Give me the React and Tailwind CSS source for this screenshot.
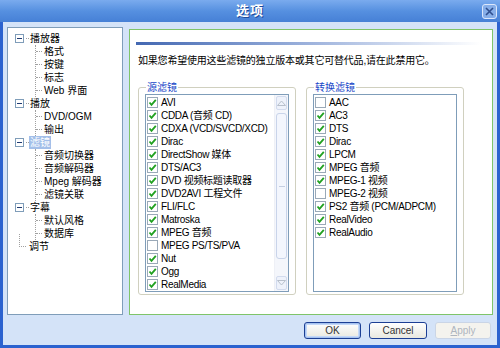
import React from 'react';

const FONT = { fontFamily: '"Liberation Sans", "Noto Sans CJK SC", sans-serif' };

const tree = [
  { label: '播放器', children: ['格式', '按键', '标志', 'Web 界面'] },
  { label: '播放', children: ['DVD/OGM', '输出'] },
  { label: '滤镜', selected: true, children: ['音频切换器', '音频解码器', 'Mpeg 解码器', '滤镜关联'] },
  { label: '字幕', children: ['默认风格', '数据库'] },
];

const sourceFilters = [
  ['AVI', true],
  ['CDDA (音频 CD)', true],
  ['CDXA (VCD/SVCD/XCD)', true],
  ['Dirac', true],
  ['DirectShow 媒体', true],
  ['DTS/AC3', true],
  ['DVD 视频标题读取器', true],
  ['DVD2AVI 工程文件', true],
  ['FLI/FLC', true],
  ['Matroska', true],
  ['MPEG 音频', true],
  ['MPEG PS/TS/PVA', false],
  ['Nut', true],
  ['Ogg', true],
  ['RealMedia', true],
];

const transformFilters = [
  ['AAC', false],
  ['AC3', true],
  ['DTS', true],
  ['Dirac', true],
  ['LPCM', true],
  ['MPEG 音频', true],
  ['MPEG-1 视频', true],
  ['MPEG-2 视频', false],
  ['PS2 音频 (PCM/ADPCM)', true],
  ['RealVideo', true],
  ['RealAudio', true],
];

const MinusBox = () => (
  <span className="w-[9px] h-[9px] border border-[#7f9db9] bg-white flex items-center justify-center shrink-0">
    <span className="w-[5px] h-px bg-[#1f3a70]" />
  </span>
);

const Check = ({ on }) => (
  <span className="w-[11px] h-[11px] border border-[#9aa9b8] bg-white flex items-center justify-center shrink-0">
    {on && (
      <svg width="9" height="9" viewBox="0 0 9 9">
        <path d="M1.5 4.5 L3.5 6.8 L7.8 1.8" fill="none" stroke="#21a121" strokeWidth="1.8" />
      </svg>
    )}
  </span>
);

const Arrow = ({ up }) => (
  <svg width="9" height="6" viewBox="0 0 9 6">
    <path d={up ? 'M0.5 5.5 L4.5 1 L8.5 5.5 Z' : 'M0.5 0.5 L4.5 5 L8.5 0.5 Z'} fill="none" stroke="#b8c0cc" strokeWidth="1" />
  </svg>
);

const ScrollBar = () => (
  <div className="w-[14px] flex flex-col bg-[#f4f6fb] border-l border-[#eef0f6]">
    <div className="h-[14px] m-px rounded-[2px] border border-[#d2dbee] bg-[#eef2fb] flex items-center justify-center">
      <Arrow up />
    </div>
    <div className="flex-1 px-px py-[2px] flex flex-col">
      <div className="h-[146px] rounded-[3px] border border-[#c9d4ea] bg-[#f3f6fd] flex items-center justify-center">
        <span className="w-[6px] h-px bg-[#c4cee2]" />
      </div>
    </div>
    <div className="h-[14px] m-px rounded-[2px] border border-[#d2dbee] bg-[#eef2fb] flex items-center justify-center">
      <Arrow />
    </div>
  </div>
);

const ItemList = ({ items }) => (
  <div className="pt-[1px] pl-[1px]">
    {items.map(([name, on]) => (
      <div key={name} className="h-[13px] flex items-center gap-[3px] text-[10px] leading-[13px] tracking-[-0.3px] text-black whitespace-nowrap">
        <Check on={on} />
        <span>{name}</span>
      </div>
    ))}
  </div>
);

const GroupBox = ({ title, items, scroll }) => (
  <fieldset className="w-[158px] h-[214px] border border-[#d0d0bf] rounded-[3px] px-[6px] pb-[6px] pt-0 -mt-[5px]">
    <legend className="ml-[1px] px-[1px] text-[10px] leading-[13px] text-[#1746c8]">{title}</legend>
    <div className="h-[198px] border border-[#7f9db9] bg-white flex overflow-hidden">
      <div className="flex-1">
        <ItemList items={items} />
      </div>
      {scroll && <ScrollBar />}
    </div>
  </fieldset>
);

const Tree = () => (
  <div className="w-[116px] h-[288px] border border-[#7f9db9] bg-white pt-[4px] text-[10px] leading-[13px] text-black">
    {tree.map((node, i) => (
      <div key={node.label}>
        <div className="h-[13px] flex items-center pl-[7px]">
          <MinusBox />
          <span className="ml-[2px] w-[3px] border-t border-dotted border-[#a0a0a0]" />
          <span className={node.selected ? 'px-[1px] bg-[#a3bfe9] text-white' : 'px-[1px]'}>{node.label}</span>
        </div>
        <div className="ml-[27px] border-l border-dotted border-[#a0a0a0]">
          {node.children.map((c) => (
            <div key={c} className="h-[13px] flex items-center">
              <span className="w-[6px] border-t border-dotted border-[#a0a0a0]" />
              <span className="ml-[2px]">{c}</span>
            </div>
          ))}
        </div>
        {i === tree.length - 1 && (
          <div className="ml-[11px] h-[13px] flex items-end">
            <div className="h-[13px] w-[7px] border-l border-b border-dotted border-[#a0a0a0] mb-[6px]" />
            <span className="ml-[3px] leading-[13px]">调节</span>
          </div>
        )}
      </div>
    ))}
  </div>
);

const Btn = ({ children, w, primary, disabled }) => (
  <button
    className={`h-[17px] rounded-[3px] border text-[10px] leading-none flex items-center justify-center ${
      disabled
        ? 'border-[#cad5e6] bg-[#f4f3ee] text-[#aeb5be]'
        : primary
        ? 'border-[#1c3f94] bg-gradient-to-b from-white to-[#e8e8e0] text-[#333] shadow-[inset_0_0_0_1px_#a6c3f0,inset_0_0_0_2px_#c4d8f8]'
        : 'border-[#1c3f94] bg-gradient-to-b from-white to-[#e8e8e0] text-[#333]'
    }`}
    style={{ width: w }}
  >
    {children}
  </button>
);

export default function App() {
  return (
    <div className="w-[500px] h-[348px] flex flex-col bg-[#2b62cf] overflow-hidden" style={FONT}>
      {/* title bar */}
      <div className="h-[22px] relative flex items-center justify-center bg-gradient-to-b from-[#7aabee] via-[#5690e0] to-[#4680d6]">
        <span className="text-[13px] font-bold text-white tracking-[1px] [text-shadow:1px_1px_0_#1d4a9c]">选项</span>
        <span className="absolute right-[3px] top-[4px] w-[15px] h-[15px] rounded-[3px] border border-[#dbe7fb] bg-[#86aee8] flex items-center justify-center">
          <svg width="9" height="9" viewBox="0 0 9 9">
            <path d="M1 1 L8 8 M8 1 L1 8" stroke="#2f4f8e" strokeWidth="1.6" />
          </svg>
        </span>
      </div>

      {/* body */}
      <div className="flex-1 mx-[3px] mb-[3px] bg-[#d4e3f8] flex flex-col">
        <div className="flex gap-[6px] pt-[5px] pl-[4px]">
          <Tree />
          <div className="w-[364px] h-[286px] mt-[2px] border border-[#7fc46a] bg-white px-[6px] pt-[12px]">
            <div className="h-[3px] w-[345px] bg-gradient-to-r from-[#4468b2] via-[#9db2dc] to-white" />
            <div className="mt-[9px] ml-[2px] text-[10px] leading-[13px] tracking-[-0.2px] text-black whitespace-nowrap">
              如果您希望使用这些滤镜的独立版本或其它可替代品,请在此禁用它。
            </div>
            <div className="mt-[19px] ml-[2px] flex gap-[10px]">
              <GroupBox title="源滤镜" items={sourceFilters} scroll />
              <GroupBox title="转换滤镜" items={transformFilters} />
            </div>
          </div>
        </div>
        <div className="flex justify-end gap-[8px] pr-[6px] mt-[7px]">
          <Btn w={57} primary>OK</Btn>
          <Btn w={58}>Cancel</Btn>
          <Btn w={56} disabled><span className="underline">A</span>pply</Btn>
        </div>
      </div>
    </div>
  );
}
